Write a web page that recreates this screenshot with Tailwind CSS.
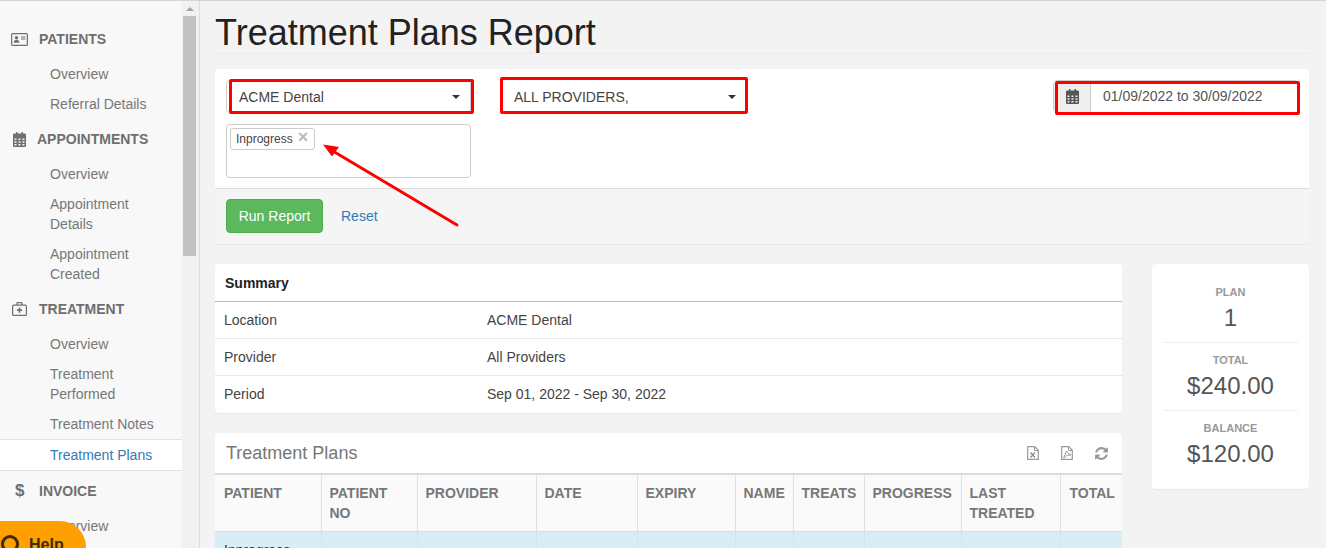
<!DOCTYPE html>
<html>
<head>
<meta charset="utf-8">
<script src="https://cdn.jsdelivr.net/npm/@tailwindcss/browser@4"></script>
</head>
<body class="font-['Liberation_Sans',Arial,sans-serif] text-[14px] leading-[20px] text-[#333] bg-[#f3f3f3] overflow-hidden">
<div class="relative flex h-[548px] w-[1326px] overflow-hidden border-t border-t-[#d4d4d4]">
  <!-- sidebar -->
  <aside class="w-[182px] shrink-0 bg-[#f8f8f8] pt-[18px] text-[#777]">
    <div class="flex items-center h-[40px] pl-[11px] font-bold text-[#6f6f6f]">
      <svg class="w-[17px] h-[13px] mr-[11px]" viewBox="0 0 17 13" fill="none"><rect x=".6" y=".6" width="15.8" height="11.8" rx="1" stroke="#6f6f6f" stroke-width="1.2"/><circle cx="5.5" cy="4.7" r="1.7" fill="#6f6f6f"/><path d="M2.6 9.8c0-4 5.8-4 5.8 0z" fill="#6f6f6f"/><path d="M10 4h4.5M10 6h4.5" stroke="#6f6f6f" stroke-width="1.2"/></svg>
      <span>PATIENTS</span>
    </div>
    <div class="py-[5px] pl-[50px]">Overview</div>
    <div class="py-[5px] pl-[50px]">Referral Details</div>
    <div class="flex items-center h-[40px] pl-[13px] font-bold text-[#6f6f6f]">
      <svg class="w-[13px] h-[15px] mr-[11px]" viewBox="0 0 13 15"><path fill="#6f6f6f" fill-rule="evenodd" d="M3 0h1.500v1.500h4V0H10v1.500h1.700c.7 0 1.300.6 1.300 1.300v10.900c0 .7-.6 1.300-1.300 1.300H1.300C.6 15 0 14.400 0 13.700V2.800c0-.7.6-1.300 1.300-1.300H3zM1.500 6.500V8h2V6.500zm4 0V8h2V6.500zm4 0V8h2V6.500zM1.500 9.300v1.500h2V9.300zm4 0v1.500h2V9.300zm4 0v1.500h2V9.300zM1.500 12v1.500h2V12zm4 0v1.500h2V12zm4 0v1.500h2V12z"/></svg>
      <span>APPOINTMENTS</span>
    </div>
    <div class="py-[5px] pl-[50px]">Overview</div>
    <div class="py-[5px] pl-[50px] pr-[10px]">Appointment Details</div>
    <div class="py-[5px] pl-[50px] pr-[10px]">Appointment Created</div>
    <div class="flex items-center h-[40px] pl-[12px] font-bold text-[#6f6f6f]">
      <svg class="w-[15px] h-[14px] mr-[12px]" viewBox="0 0 15 14" fill="none"><rect x=".6" y="3.100" width="13.800" height="10.300" rx="1" stroke="#6f6f6f" stroke-width="1.200"/><path d="M5 3V1.200c0-.4.300-.6.600-.6h3.800c.3 0 .6.200.6.600V3" stroke="#6f6f6f" stroke-width="1.200"/><path d="M7.500 5.500v5.200M4.900 8.100h5.200" stroke="#6f6f6f" stroke-width="1.600"/></svg>
      <span>TREATMENT</span>
    </div>
    <div class="py-[5px] pl-[50px]">Overview</div>
    <div class="py-[5px] pl-[50px] pr-[10px]">Treatment Performed</div>
    <div class="py-[5px] pl-[50px]">Treatment Notes</div>
    <div class="py-[5px] pl-[50px] bg-white border-y border-[#e2e2e2] text-[#337ab7]">Treatment Plans</div>
    <div class="flex items-center h-[40px] pl-[15px] font-bold text-[#6f6f6f]">
      <span class="w-[24px] text-[17px] font-bold">$</span>
      <span>INVOICE</span>
    </div>
    <div class="py-[5px] pl-[50px]">Overview</div>
  </aside>
  <!-- scrollbar -->
  <div class="w-[18px] shrink-0 bg-[#f1f1f1] border-r border-r-[#dcdcdc] flex flex-col items-center pr-[2px]">
    <div class="h-[15px] flex items-center justify-center"><div class="w-0 h-0 border-x-[4px] border-x-transparent border-b-[4px] border-b-[#a3a3a3]"></div></div>
    <div class="w-[13px] h-[240px] bg-[#c1c1c1]"></div>
  </div>
  <!-- main -->
  <main class="flex-1 pl-[15px] pr-[17px] min-w-0">
    <h1 class="text-[36px] leading-[40px] font-normal text-[#222] pt-[12px] border-b border-[#ebebeb] h-[53px]">Treatment Plans Report</h1>
    <section class="mt-[15px] bg-white rounded-[4px] shadow-[0_1px_1px_rgba(0,0,0,0.05)]">
      <div class="h-[119px] px-[11px] pt-[11px] flex">
        <div class="w-[245px]">
          <div class="h-[33px] bg-white border border-[#ccc] rounded-[4px] flex items-center justify-between pl-[12px] pr-[10px] text-[#444]">
            <span>ACME Dental</span>
            <span class="w-0 h-0 border-x-[4px] border-x-transparent border-t-[4px] border-t-[#333]"></span>
          </div>
          <div class="mt-[11px] h-[54px] border border-[#ccc] rounded-[4px] p-[3px]">
            <span class="inline-flex items-center h-[22px] w-[85px] border border-[#ccc] rounded-[3px] pl-[5px] text-[12px] text-[#444] bg-white">Inprogress<span class="ml-[5px] mt-[-4px] text-[#bbb] text-[18px] leading-[14px] font-bold">×</span></span>
          </div>
        </div>
        <div class="w-[245px] ml-[31px] h-[33px] flex items-center justify-between pl-[12px] pr-[11px] text-[#444]">
          <span>ALL PROVIDERS,</span>
          <span class="w-0 h-0 border-x-[4px] border-x-transparent border-t-[4px] border-t-[#333]"></span>
        </div>
        <div class="ml-auto mr-[-1px] w-[246px] h-[33px] flex border border-[#ccc] rounded-[4px] text-[#555]">
          <div class="w-[37px] shrink-0 bg-[#eee] border-r border-[#ccc] flex items-center justify-center">
            <svg class="w-[13px] h-[15px]" viewBox="0 0 13 15"><path fill="#555" fill-rule="evenodd" d="M3 0h1.500v1.500h4V0H10v1.500h1.700c.7 0 1.300.6 1.300 1.300v10.900c0 .7-.6 1.300-1.300 1.300H1.300C.6 15 0 14.400 0 13.700V2.800c0-.7.6-1.300 1.300-1.300H3zM1.500 6.500V8h2V6.500zm4 0V8h2V6.500zm4 0V8h2V6.500zM1.500 9.300v1.500h2V9.300zm4 0v1.500h2V9.300zm4 0v1.500h2V9.300zM1.500 12v1.500h2V12zm4 0v1.500h2V12zm4 0v1.500h2V12z"/></svg>
          </div>
          <div class="pl-[12px] leading-[31px]">01/09/2022 to 30/09/2022</div>
        </div>
      </div>
      <div class="h-[56px] bg-[#f5f5f5] border-t border-[#ddd] rounded-b-[4px] px-[11px] pt-[10px] flex items-start">
        <div class="w-[97px] h-[34px] bg-[#5cb85c] border border-[#4cae4c] rounded-[4px] text-white text-center leading-[32px]">Run Report</div>
        <div class="ml-[18px] leading-[34px] text-[#337ab7]">Reset</div>
      </div>
    </section>
    <div class="flex mt-[20px] items-start">
      <div class="w-[907px] shrink-0">
        <section class="bg-white rounded-[4px] shadow-[0_1px_1px_rgba(0,0,0,0.05)] text-[#444]">
          <div class="h-[38px] border-b border-[#bbb] pl-[10px] pt-[9px] font-bold text-[#222]">Summary</div>
          <div class="h-[37px] border-b border-[#e8e8e8] flex items-center pl-[9px]"><span class="w-[263px]">Location</span><span>ACME Dental</span></div>
          <div class="h-[37px] border-b border-[#e8e8e8] flex items-center pl-[9px]"><span class="w-[263px]">Provider</span><span>All Providers</span></div>
          <div class="h-[37px] border-b border-transparent flex items-center pl-[9px]"><span class="w-[263px]">Period</span><span>Sep 01, 2022 - Sep 30, 2022</span></div>
        </section>
        <section class="mt-[20px] bg-white rounded-t-[4px]">
          <div class="h-[40px] flex items-center pl-[11px] pr-[13px]">
            <span class="text-[18px] text-[#777]">Treatment Plans</span>
            <div class="ml-auto flex items-center">
              <svg class="w-[12px] h-[14px] mr-[22px]" viewBox="0 0 12 14" fill="none"><path d="M.7.7h7l3.600 3.600v9H.7z" stroke="#9a9a9a" stroke-width="1.200"/><path d="M7.500.7v3.800h3.800" stroke="#9a9a9a"/><path d="M3.500 6.500l4.500 5M8 6.500l-4.500 5" stroke="#8a8a8a" stroke-width="1.300"/></svg>
              <svg class="w-[12px] h-[14px] mr-[21px]" viewBox="0 0 12 14" fill="none"><path d="M.7.7h7l3.600 3.600v9H.7z" stroke="#9a9a9a" stroke-width="1.200"/><path d="M7.500.7v3.800h3.800" stroke="#9a9a9a"/><path d="M5.400 5c-.5 0 0 2.600-2.500 5.800-.6 1 .6 1.200 1.400 0 1-1.500 3-1.800 5-1.500.8 0 .8-1-.3-1C6.700 8.300 5.900 5 5.400 5z" stroke="#8a8a8a" stroke-width=".9"/></svg>
              <svg class="w-[15px] h-[15px]" viewBox="0 0 1792 1792"><path fill="#999" d="M1639 1056q0 5-1 7-64 268-268 434.500t-478 166.500q-146 0-282.500-55t-243.500-157l-129 129q-19 19-45 19t-45-19-19-45v-448q0-26 19-45t45-19h448q26 0 45 19t19 45-19 45l-137 137q71 66 161 102t187 36q134 0 250-65t186-179q11-17 53-117 8-23 30-23h192q13 0 22.500 9.500t9.500 22.500zm25-800v448q0 26-19 45t-45 19h-448q-26 0-45-19t-19-45 19-45l138-138q-148-137-349-137-134 0-250 65t-186 179q-11 17-53 117-8 23-30 23h-199q-13 0-22.500-9.500t-9.500-22.500v-7q65-268 270-434.500t480-166.500q146 0 284 55.500t245 156.500l130-129q19-19 45-19t45 19 19 45z"/></svg>
            </div>
          </div>
          <table class="w-full table-fixed border-collapse border-t-2 border-[#ddd]">
            <thead class="bg-[#fafafa] text-[#777] text-left">
              <tr class="border-b border-[#ddd]">
                <th class="w-[106px] h-[57px] align-top pt-[8px] pl-[9px] pr-[8px] font-bold border-r border-[#e0e0e0]">PATIENT</th>
                <th class="w-[96px] align-top pt-[8px] px-[8px] font-bold border-r border-[#e0e0e0]">PATIENT NO</th>
                <th class="w-[119px] align-top pt-[8px] px-[8px] font-bold border-r border-[#e0e0e0]">PROVIDER</th>
                <th class="w-[101px] align-top pt-[8px] px-[8px] font-bold border-r border-[#e0e0e0]">DATE</th>
                <th class="w-[98px] align-top pt-[8px] px-[8px] font-bold border-r border-[#e0e0e0]">EXPIRY</th>
                <th class="w-[58px] align-top pt-[8px] px-[8px] font-bold border-r border-[#e0e0e0]">NAME</th>
                <th class="w-[71px] align-top pt-[8px] px-[8px] font-bold border-r border-[#e0e0e0]">TREATS</th>
                <th class="w-[97px] align-top pt-[8px] px-[8px] font-bold border-r border-[#e0e0e0]">PROGRESS</th>
                <th class="w-[99px] align-top pt-[8px] px-[8px] font-bold border-r border-[#e0e0e0]">LAST TREATED</th>
                <th class="align-top pt-[8px] pl-[9px] pr-[7px] font-bold">TOTAL</th>
              </tr>
            </thead>
            <tbody class="bg-[#d9edf7] text-[#333]">
              <tr>
                <td class="h-[40px] align-top pt-[8px] pl-[9px] border-r border-[#d3e6f0]">Inprogress</td>
                <td class="border-r border-[#d3e6f0]"></td><td class="border-r border-[#d3e6f0]"></td><td class="border-r border-[#d3e6f0]"></td><td class="border-r border-[#d3e6f0]"></td><td class="border-r border-[#d3e6f0]"></td><td class="border-r border-[#d3e6f0]"></td><td class="border-r border-[#d3e6f0]"></td><td class="border-r border-[#d3e6f0]"></td><td></td>
              </tr>
            </tbody>
          </table>
        </section>
      </div>
      <section class="ml-[30px] w-[157px] shrink-0 bg-white rounded-[4px] shadow-[0_1px_1px_rgba(0,0,0,0.05)] px-[11px] pt-[20px] h-[225px] text-center">
        <div class="text-[11px] leading-[16px] font-bold text-[#999]">PLAN</div>
        <div class="text-[24px] leading-[32px] mt-[2px] text-[#555] pb-[8px] border-b border-[#eee]">1</div>
        <div class="text-[11px] leading-[16px] font-bold text-[#999] mt-[9px]">TOTAL</div>
        <div class="text-[24px] leading-[32px] mt-[2px] text-[#555] pb-[8px] border-b border-[#eee]">$240.00</div>
        <div class="text-[11px] leading-[16px] font-bold text-[#999] mt-[9px]">BALANCE</div>
        <div class="text-[24px] leading-[32px] mt-[2px] text-[#555]">$120.00</div>
      </section>
    </div>
  </main>

  <!-- annotations over the screenshot -->
  <div class="absolute left-[229px] top-[78px] w-[245px] h-[35px] border-[3px] border-[#f00] rounded-[2px]"></div>
  <div class="absolute left-[500px] top-[76px] w-[248px] h-[37px] border-[3px] border-[#f00] rounded-[2px]"></div>
  <div class="absolute left-[1055px] top-[80px] w-[245px] h-[34px] border-[3px] border-[#f00] rounded-[2px]"></div>
  <svg class="absolute left-[320px] top-[140px]" width="145" height="92" viewBox="0 0 145 92" fill="none"><path d="M137 84L12 9.500" stroke="#f00" stroke-width="3" stroke-linecap="round"/><path d="M3 3.500l16 2.500-7 9.500z" fill="#f00"/></svg>
  <!-- help button -->
  <div class="absolute left-0 top-[520px] w-[86px] h-[40px] bg-[#ffa000] rounded-tr-[26px] flex items-start pt-[14px] pl-[1px] font-bold text-[16px] text-[#3b2c06]">
    <span class="w-[18px] h-[18px] rounded-full border-[3px] border-[#3b2c06] shrink-0"></span>
    <span class="ml-[10px] leading-[20px]">Help</span>
  </div>
</div>
</body>
</html>
